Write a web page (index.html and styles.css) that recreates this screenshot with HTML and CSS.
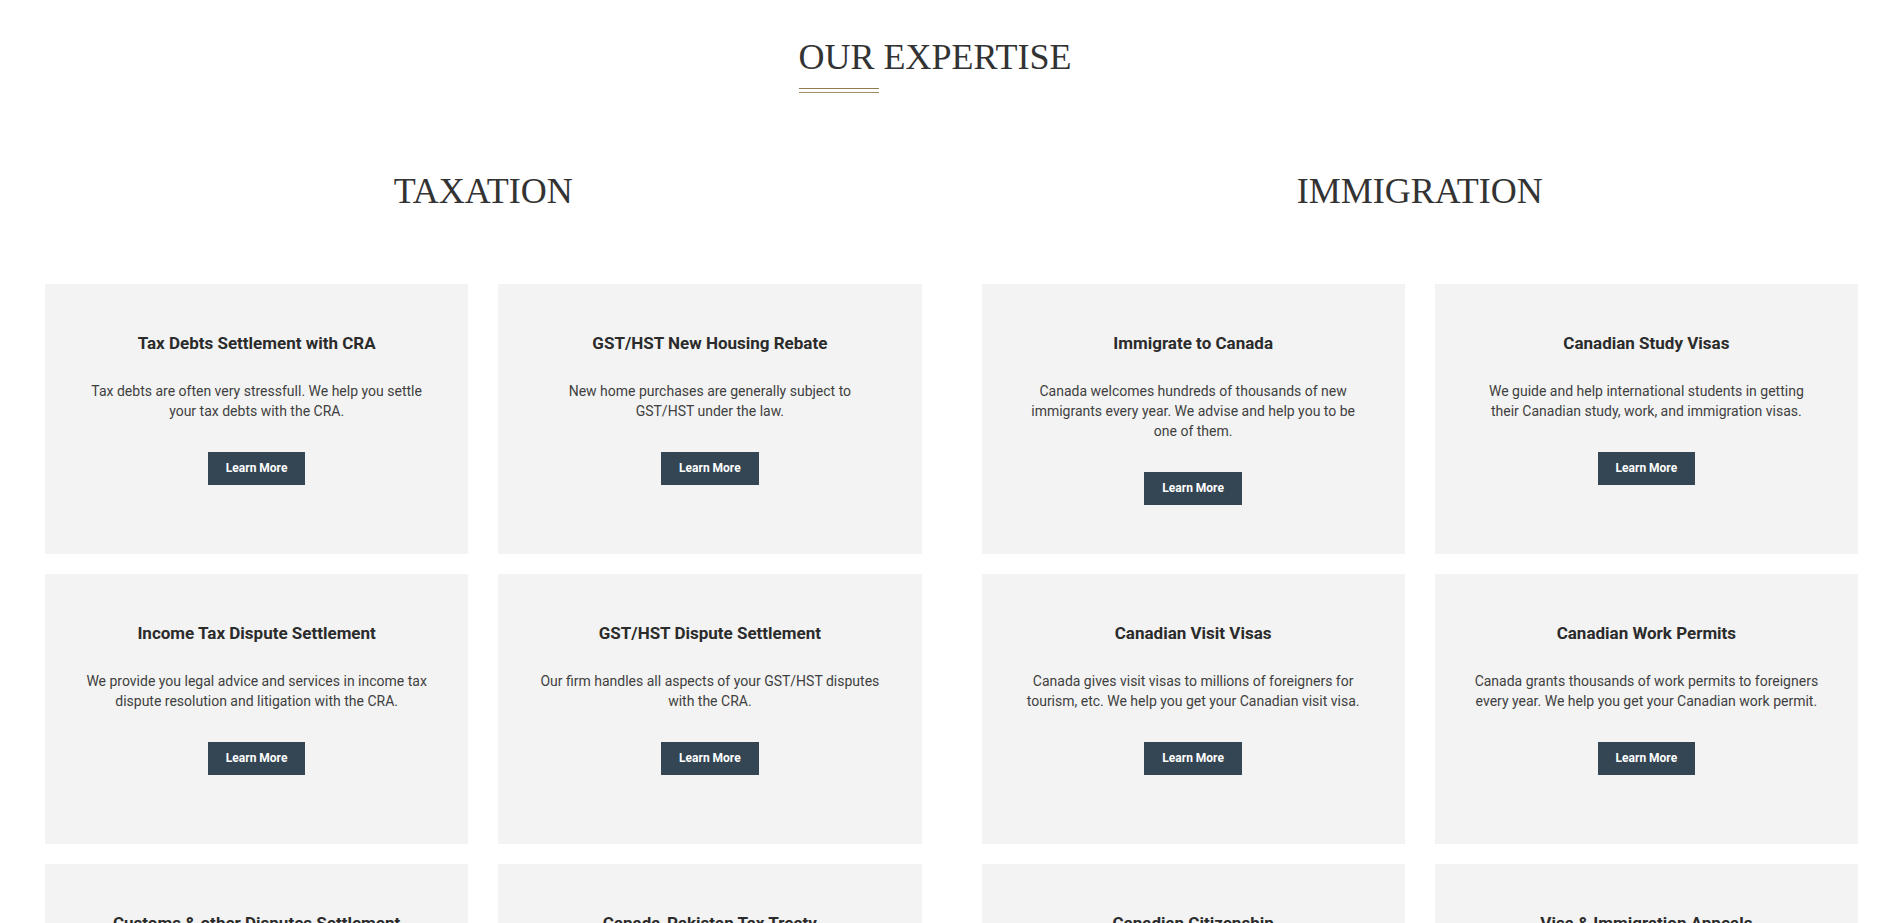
FILE: index.html
```html
<!DOCTYPE html>
<html lang="en">
<head>
<meta charset="utf-8">
<title>Our Expertise</title>
<link rel="stylesheet" href="styles.css">
</head>
<body>
<section class="expertise">
  <div class="title-wrap">
    <h2 class="title">OUR EXPERTISE</h2>
  </div>
  <div class="columns">
    <div class="column">
      <h3 class="col-title">TAXATION</h3>
      <div class="cards">
        <div class="card">
          <h4 class="card-title">Tax Debts Settlement with CRA</h4>
          <p class="card-text">Tax debts are often very stressfull. We help you settle your tax debts with the CRA.</p>
          <a class="btn" href="#">Learn More</a>
        </div>
        <div class="card">
          <h4 class="card-title">GST/HST New Housing Rebate</h4>
          <p class="card-text">New home purchases are generally subject to GST/HST under the law.</p>
          <a class="btn" href="#">Learn More</a>
        </div>
        <div class="card">
          <h4 class="card-title">Income Tax Dispute Settlement</h4>
          <p class="card-text">We provide you legal advice and services in income tax dispute resolution and litigation with the CRA.</p>
          <a class="btn" href="#">Learn More</a>
        </div>
        <div class="card">
          <h4 class="card-title">GST/HST Dispute Settlement</h4>
          <p class="card-text">Our firm handles all aspects of your GST/HST disputes with the CRA.</p>
          <a class="btn" href="#">Learn More</a>
        </div>
        <div class="card">
          <h4 class="card-title">Customs &amp; other Disputes Settlement</h4>
          <p class="card-text">We help you resolve customs and other tax disputes with the CBSA and the CRA.</p>
          <a class="btn" href="#">Learn More</a>
        </div>
        <div class="card">
          <h4 class="card-title">Canada-Pakistan Tax Treaty</h4>
          <p class="card-text">We advise you on the Canada-Pakistan Tax Treaty and cross-border taxation.</p>
          <a class="btn" href="#">Learn More</a>
        </div>
      </div>
    </div>
    <div class="column">
      <h3 class="col-title">IMMIGRATION</h3>
      <div class="cards">
        <div class="card">
          <h4 class="card-title">Immigrate to Canada</h4>
          <p class="card-text">Canada welcomes hundreds of thousands of new immigrants every year. We advise and help you to be one of them.</p>
          <a class="btn" href="#">Learn More</a>
        </div>
        <div class="card">
          <h4 class="card-title">Canadian Study Visas</h4>
          <p class="card-text">We guide and help international students in getting their Canadian study, work, and immigration visas.</p>
          <a class="btn" href="#">Learn More</a>
        </div>
        <div class="card">
          <h4 class="card-title">Canadian Visit Visas</h4>
          <p class="card-text">Canada gives visit visas to millions of foreigners for tourism, etc. We help you get your Canadian visit visa.</p>
          <a class="btn" href="#">Learn More</a>
        </div>
        <div class="card">
          <h4 class="card-title">Canadian Work Permits</h4>
          <p class="card-text">Canada grants thousands of work permits to foreigners every year. We help you get your Canadian work permit.</p>
          <a class="btn" href="#">Learn More</a>
        </div>
        <div class="card">
          <h4 class="card-title">Canadian Citizenship</h4>
          <p class="card-text">We help permanent residents apply for and obtain their Canadian citizenship.</p>
          <a class="btn" href="#">Learn More</a>
        </div>
        <div class="card">
          <h4 class="card-title">Visa &amp; Immigration Appeals</h4>
          <p class="card-text">We represent you in your visa and immigration appeals and refusals.</p>
          <a class="btn" href="#">Learn More</a>
        </div>
      </div>
    </div>
  </div>
</section>
</body>
</html>
```

FILE: styles.css
```css
html, body {
  margin: 0;
  padding: 0;
  background: #ffffff;
}

body {
  font-family: Roboto, "Liberation Sans", Arial, sans-serif;
  color: #333333;
}

.expertise {
  padding: 36px 45px 60px;
}

.title-wrap {
  display: flex;
  justify-content: center;
}

.title {
  margin: 0 33px 0 0;
  font-family: "Liberation Serif", "Times New Roman", serif;
  font-weight: 400;
  font-size: 36px;
  line-height: 1.2;
  color: #333333;
  display: flex;
  flex-direction: column;
  align-items: flex-start;
}

.title::after {
  content: "";
  display: block;
  width: 80px;
  height: 3px;
  margin-top: 9px;
  border-top: 1px solid #8f7c4c;
  border-bottom: 1px solid #a68f5e;
}

.columns {
  display: grid;
  grid-template-columns: 1fr 1fr;
  column-gap: 60px;
  margin-top: 77px;
}

.col-title {
  margin: 0 0 71px;
  font-family: "Liberation Serif", "Times New Roman", serif;
  font-weight: 400;
  font-size: 36px;
  line-height: 1.2;
  text-align: center;
  color: #333333;
}

.cards {
  display: grid;
  grid-template-columns: 1fr 1fr;
  column-gap: 30px;
  row-gap: 20px;
}

.card {
  background: #f3f3f3;
  min-height: 270px;
  box-sizing: border-box;
  padding: 48px 39.5px 40px;
  text-align: center;
}

.card-title {
  margin: 0 0 27px;
  font-size: 17px;
  line-height: 22px;
  font-weight: 700;
  color: #2b2b2b;
}

.card-text {
  margin: 0 0 31px;
  font-size: 14px;
  line-height: 20px;
  color: #3f3f3f;
}

.btn {
  display: inline-block;
  background: #344654;
  color: #ffffff;
  font-size: 12px;
  font-weight: 700;
  line-height: 13px;
  padding: 10px 18px;
  text-decoration: none;
}
```
